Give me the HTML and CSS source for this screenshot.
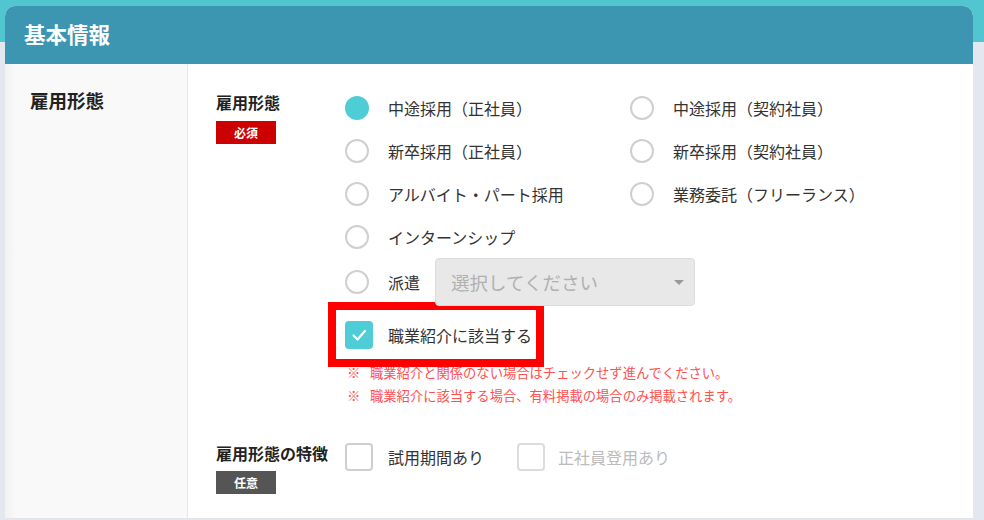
FILE: index.html
```html
<!DOCTYPE html>
<html lang="ja">
<head>
<meta charset="utf-8">
<title>基本情報</title>
<link rel="stylesheet" href="styles.css">
</head>
<body>
<div class="card">
  <div class="card-head">基本情報</div>
  <div class="card-body">
    <div class="side"><span class="side-label">雇用形態</span></div>
    <div class="main">
      <div class="field">
        <div class="field-label">
          <div class="label-text">雇用形態</div>
          <span class="badge badge-req">必須</span>
        </div>
        <div class="field-control">
          <div class="radio-grid">
            <div class="opt"><span class="mark"><span class="radio checked"></span></span>中途採用（正社員）</div>
            <div class="opt"><span class="mark"><span class="radio"></span></span>中途採用（契約社員）</div>
            <div class="opt"><span class="mark"><span class="radio"></span></span>新卒採用（正社員）</div>
            <div class="opt"><span class="mark"><span class="radio"></span></span>新卒採用（契約社員）</div>
            <div class="opt"><span class="mark"><span class="radio"></span></span>アルバイト・パート採用</div>
            <div class="opt"><span class="mark"><span class="radio"></span></span>業務委託（フリーランス）</div>
            <div class="opt"><span class="mark"><span class="radio"></span></span>インターンシップ</div>
          </div>
          <div class="opt opt-haken">
            <span class="mark"><span class="radio"></span></span>派遣
            <div class="select">選択してください<span class="caret"></span></div>
          </div>
          <div class="highlight">
            <span class="mark"><span class="check checked"><svg viewBox="0 0 28 28" width="28" height="28"><polyline points="8.5,14.5 12.5,18.5 20,10" fill="none" stroke="#fff" stroke-width="2.2" stroke-linecap="round" stroke-linejoin="round"/></svg></span></span>職業紹介に該当する
          </div>
          <div class="notes">
            <div class="note"><span class="kome">※</span>職業紹介と関係のない場合はチェックせず進んでください。</div>
            <div class="note"><span class="kome">※</span>職業紹介に該当する場合、有料掲載の場合のみ掲載されます。</div>
          </div>
        </div>
      </div>
      <div class="field field-2">
        <div class="field-label">
          <div class="label-text">雇用形態の特徴</div>
          <span class="badge badge-opt">任意</span>
        </div>
        <div class="field-control check-row">
          <div class="opt"><span class="mark"><span class="check"></span></span>試用期間あり</div>
          <div class="opt opt-disabled"><span class="mark"><span class="check"></span></span>正社員登用あり</div>
        </div>
      </div>
    </div>
  </div>
</div>
</body>
</html>
```

FILE: styles.css
```css
* { box-sizing: border-box; }

html, body {
  margin: 0;
  padding: 0;
}

body {
  width: 984px;
  height: 520px;
  overflow: hidden;
  background: linear-gradient(to bottom, #52c6d0 0, #52c6d0 42px, #e3e7f0 42px, #e3e7f0 100%);
  font-family: "Noto Sans CJK JP", "Noto Sans", sans-serif;
  color: #333;
}

.card {
  margin: 6px 11px 0 5px;
  width: 968px;
  background: #fff;
  border-radius: 10px 10px 0 0;
}

.card-head {
  height: 58px;
  background: #3d96b1;
  border-radius: 10px 10px 0 0;
  color: #fff;
  font-size: 21.5px;
  font-weight: 700;
  line-height: 56px;
  padding-left: 19px;
}

.card-body {
  display: flex;
  border-bottom: 1px solid #e4e4e4;
}

.side {
  width: 183px;
  flex: none;
  background: linear-gradient(to right, #f2f2f2 0, #f9f9f9 12px, #f9f9f9 100%);
  border-right: 1px solid #e6e6e6;
  padding: 23px 0 0 25px;
}

.side-label {
  font-size: 18.5px;
  font-weight: 700;
  line-height: 26px;
  color: #222;
}

.main {
  flex: 1;
  padding: 22px 0 24px 28px;
}

.field {
  display: flex;
}

.field-label {
  width: 129px;
  flex: none;
  padding-top: 5px;
}

.label-text {
  font-size: 16px;
  font-weight: 700;
  line-height: 22px;
  color: #222;
}

.badge {
  display: block;
  width: 60px;
  height: 23px;
  margin-top: 8px;
  color: #fff;
  font-size: 12px;
  font-weight: 700;
  line-height: 23px;
  text-align: center;
}

.badge-req { background: #cc0000; }
.badge-opt { background: #555; margin-top: 7px; }

.field-control {
  flex: 1;
}

.radio-grid {
  display: grid;
  grid-template-columns: 285px auto;
  grid-auto-rows: 43px;
}

.opt {
  display: flex;
  align-items: center;
  font-size: 16px;
  line-height: 22px;
  color: #333;
  white-space: nowrap;
}

.mark {
  width: 43px;
  flex: none;
  display: flex;
  align-items: center;
}

.radio {
  width: 24px;
  height: 24px;
  border-radius: 50%;
  border: 2px solid #cfcfcf;
  background: #fff;
}

.radio.checked {
  border-color: #4ecdd6;
  background: #4ecdd6;
}

.opt-haken {
  height: 48px;
}

.select {
  margin-left: 15px;
  width: 260px;
  height: 48px;
  background: #e8e8e8;
  border: 1px solid #dcdcdc;
  border-radius: 4px;
  color: #b0b0b0;
  font-size: 18.5px;
  line-height: 46px;
  padding-left: 15px;
  position: relative;
}

.caret {
  position: absolute;
  right: 10px;
  top: 21px;
  width: 0;
  height: 0;
  border-left: 5px solid transparent;
  border-right: 5px solid transparent;
  border-top: 5px solid #999;
}

.highlight {
  display: flex;
  align-items: center;
  width: 200px;
  height: 49px;
  margin: 4px 0 0 -9px;
  padding-left: 9px;
  outline: 8px solid #ff0000;
  font-size: 16px;
  line-height: 22px;
  color: #333;
  white-space: nowrap;
}

.check {
  width: 28px;
  height: 28px;
  border: 2px solid #cfcfcf;
  border-radius: 4px;
  background: #fff;
  display: block;
}

.check.checked {
  border: none;
  background: #4ecdd6;
}

.check svg { display: block; }

.notes {
  margin-top: 2px;
}

.note {
  display: flex;
  font-size: 13.3px;
  line-height: 23px;
  color: #ff4f4f;
  white-space: nowrap;
  padding-left: 2px;
}

.kome {
  width: 23px;
  flex: none;
}

.field-2 {
  margin-top: 35px;
}

.field-2 .field-label {
  padding-top: 0;
}

.check-row {
  display: flex;
  align-items: flex-start;
  padding-top: 1px;
}

.check-row .opt {
  height: 28px;
  margin-right: 33px;
}

.check-row .mark {
  width: 43px;
}

.check-row .opt-disabled {
  color: #bbb;
}

.check-row .opt-disabled .mark {
  width: 41px;
}

.check-row .opt-disabled .check {
  border-color: #dcdcdc;
}
```
